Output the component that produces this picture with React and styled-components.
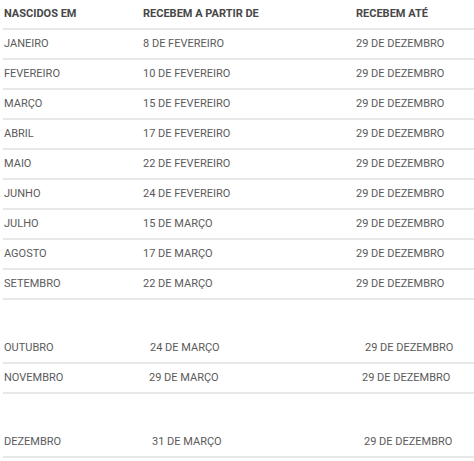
import styled, { createGlobalStyle } from "styled-components"

const Global = createGlobalStyle`
    body {
        margin: 0;
        background: #fff;
        font-family: Roboto, "Liberation Sans", Arial, sans-serif;
    }
`

const Tabela = styled.div`
    display: flex;
    flex-direction: column;
    width: 474px;
`

const Linha = styled.div`
    display: grid;
    grid-template-columns: ${p => p.$colunas};
    align-items: center;
    box-sizing: border-box;
    height: 30px;
    padding: 0 0 2px 1px;
    margin-left: 3px;
    border-bottom: 2px solid #e8e8e8;
    font-size: 11px;
    font-weight: ${p => (p.$cabecalho ? 700 : 400)};
    color: ${p => (p.$cabecalho ? "#474747" : "#5a5a5a")};
    white-space: nowrap;
`

const Espaco = styled.div`
    height: 34px;
`

const COLUNAS_A = "139px 213px 1fr"
const COLUNAS_B = "146px 215px 1fr"

const primeiros = [
    ["JANEIRO", "8 DE FEVEREIRO"],
    ["FEVEREIRO", "10 DE FEVEREIRO"],
    ["MARÇO", "15 DE FEVEREIRO"],
    ["ABRIL", "17 DE FEVEREIRO"],
    ["MAIO", "22 DE FEVEREIRO"],
    ["JUNHO", "24 DE FEVEREIRO"],
    ["JULHO", "15 DE MARÇO"],
    ["AGOSTO", "17 DE MARÇO"],
    ["SETEMBRO", "22 DE MARÇO"],
]

const App = () => {
    return (
        <Tabela>
            <Global />
            <Linha $cabecalho $colunas={COLUNAS_A}>
                <span>NASCIDOS EM</span>
                <span>RECEBEM A PARTIR DE</span>
                <span>RECEBEM ATÉ</span>
            </Linha>
            {primeiros.map(([mes, inicio]) => (
                <Linha key={mes} $colunas={COLUNAS_A}>
                    <span>{mes}</span>
                    <span>{inicio}</span>
                    <span>29 DE DEZEMBRO</span>
                </Linha>
            ))}
            <Espaco />
            <Linha $colunas={COLUNAS_B}>
                <span>OUTUBRO</span>
                <span>24 DE MARÇO</span>
                <span>29 DE DEZEMBRO</span>
            </Linha>
            <Linha $colunas="145px 213px 1fr">
                <span>NOVEMBRO</span>
                <span>29 DE MARÇO</span>
                <span>29 DE DEZEMBRO</span>
            </Linha>
            <Espaco />
            <Linha $colunas="148px 212px 1fr">
                <span>DEZEMBRO</span>
                <span>31 DE MARÇO</span>
                <span>29 DE DEZEMBRO</span>
            </Linha>
        </Tabela>
    )
}

export default App
